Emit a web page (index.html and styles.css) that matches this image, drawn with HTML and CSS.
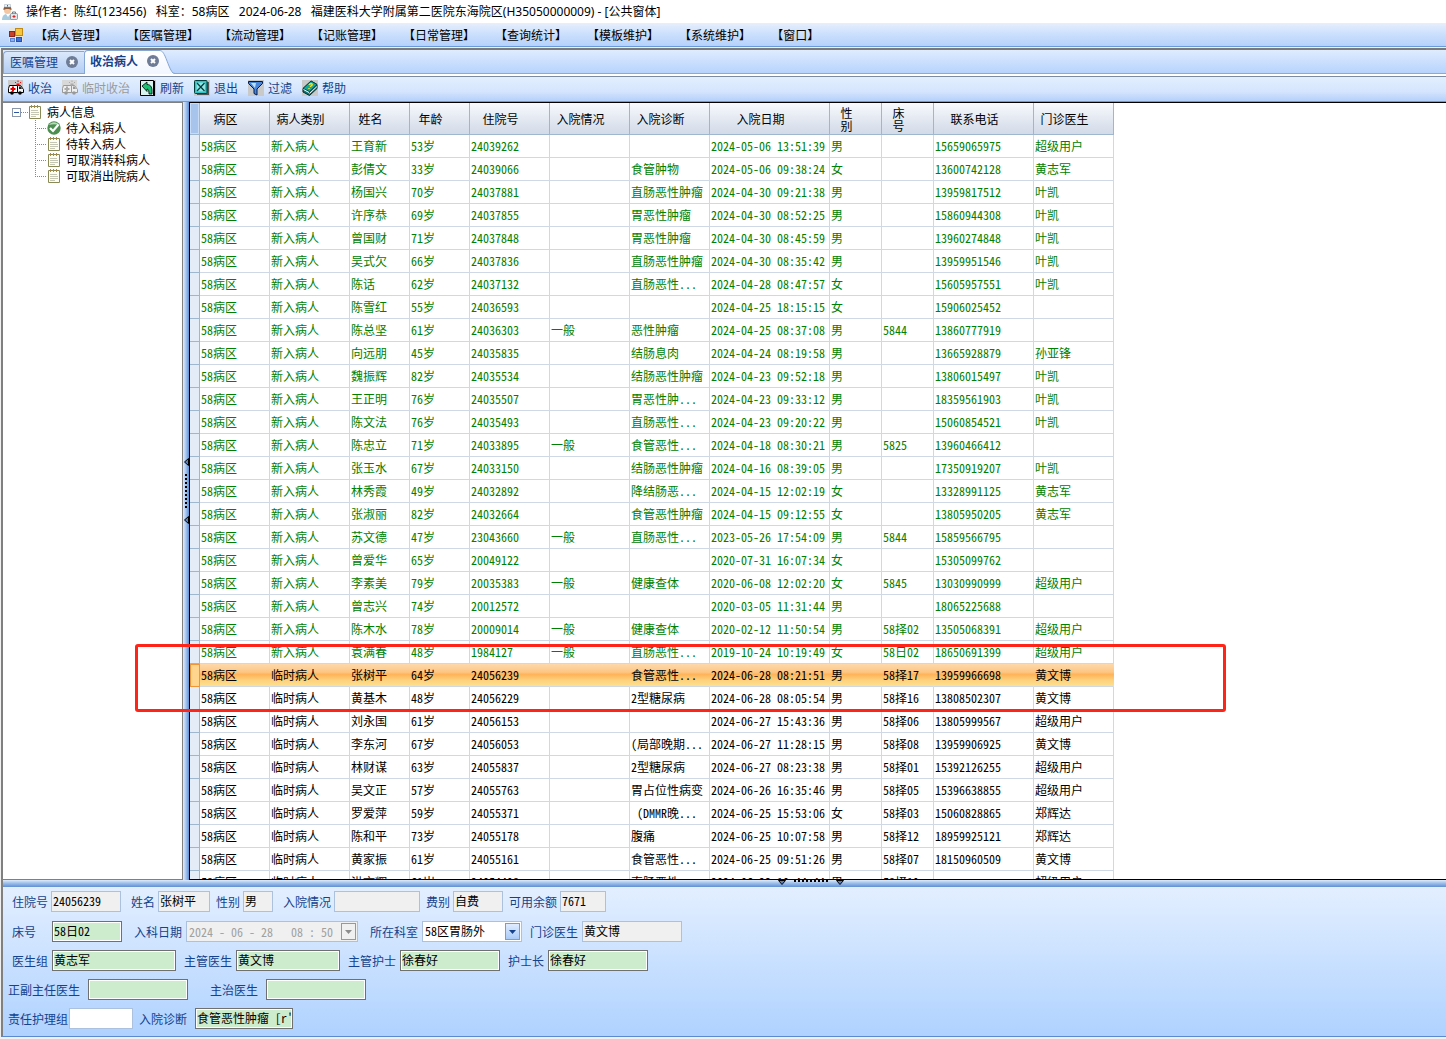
FILE: index.html
```html
<!DOCTYPE html>
<html lang="zh-CN">
<head>
    <meta charset="UTF-8">
    <meta name="viewport" content="width=device-width, initial-scale=1.0">
    <title>公共窗体</title>
    <link rel="stylesheet" href="styles.css">
</head>
<body>
    <header class="title-bar">
        <svg class="icon" viewBox="0 0 16 16">
            <path d="M0 16c0-4 2-6 5-6s5 2 5 6z" fill="#a9cbe0"/>
            <path d="M4 10l2 3 2-3z" fill="#fff"/>
            <circle cx="5.500" cy="6.500" r="3.500" fill="#f3c7a4"/>
            <path d="M1.500 6c-.5-6 8.500-6 8 0-2-1.500-6-1.500-8 0z" fill="#8a5a3a"/>
            <path d="M2.500.5h6V3h-6z" fill="#eef3f8" stroke="#9ab" stroke-width=".5"/>
            <path d="M5 1h1v1.500H5z" fill="#d33"/>
            <rect x="8.500" y="9.500" width="7" height="6" rx="1" fill="#dfe6ea" stroke="#6d7b85" stroke-width=".7"/>
            <path d="M10.500 9.500V8h3v1.500" fill="none" stroke="#6d7b85"/>
            <path d="M11.500 11h1v1h1v1h-1v1h-1v-1h-1v-1h1z" fill="#d22"/>
        </svg>
        <h1>操作者：陈红(123456)&nbsp;&nbsp; 科室：58病区&nbsp;&nbsp; 2024-06-28&nbsp;&nbsp; 福建医科大学附属第二医院东海院区(H35050000009) - [公共窗体]</h1>
    </header>

    <nav class="menu-bar">
        <svg class="icon" viewBox="0 0 16 16">
            <rect x="1" y="1" width="14" height="14" fill="#e8e4da"/>
            <rect x="1.500" y="4.500" width="5" height="5" fill="#c8402a" stroke="#8f2415"/>
            <rect x="7.500" y="1.500" width="7" height="7" fill="#f7c63c" stroke="#c08a18"/>
            <rect x="2.500" y="11.500" width="4" height="3" fill="#8fb0ee" stroke="#5a80d0"/>
            <rect x="8.500" y="10.500" width="5" height="4" fill="#3f6fd8" stroke="#2850a8"/>
        </svg>
        <button type="button">【病人管理】</button>
        <button type="button">【医嘱管理】</button>
        <button type="button">【流动管理】</button>
        <button type="button">【记账管理】</button>
        <button type="button">【日常管理】</button>
        <button type="button">【查询统计】</button>
        <button type="button">【模板维护】</button>
        <button type="button">【系统维护】</button>
        <button type="button">【窗口】</button>
    </nav>

    <main class="window">
        <div class="tabs">
            <div class="tab">
                <a href="#orders">医嘱管理</a>
                <button type="button" class="tab-close" aria-label="关闭医嘱管理">
                    <svg viewBox="0 0 12 12"><circle cx="6" cy="6" r="6" fill="#6f7c96"/><path d="M4 4l4 4M8 4l-4 4" stroke="#fff" stroke-width="2"/></svg>
                </button>
            </div>
            <div class="tab active">
                <a href="#admit">收治病人</a>
                <button type="button" class="tab-close" aria-label="关闭收治病人">
                    <svg viewBox="0 0 12 12"><circle cx="6" cy="6" r="6" fill="#6f7c96"/><path d="M4 4l4 4M8 4l-4 4" stroke="#fff" stroke-width="2"/></svg>
                </button>
            </div>
            <svg class="tab-tail" viewBox="0 0 16 24">
                <defs>
                    <linearGradient id="tail" x1="0" y1="0" x2="0" y2="1">
                        <stop offset="0" stop-color="#fff"/>
                        <stop offset="1" stop-color="#f1f6ff"/>
                    </linearGradient>
                </defs>
                <path d="M0 .5C3 .5 4 2 6 6c3 7 5 14 8 17l2 1H0z" fill="url(#tail)"/>
                <path d="M0 .5C3 .5 4 2 6 6c3 7 5 14 8 17l2 .5" fill="none" stroke="#86a6d3"/>
            </svg>
        </div>

        <div class="toolbar">
            <button type="button">
                <svg class="icon" viewBox="0 0 16 16">
                    <rect width="15" height="14" fill="#c9c9c9"/>
                    <path d="M1.500 5.500h8v7h-9v-4z" fill="#fff" stroke="#000"/>
                    <path d="M9.500 5.500h3l3 4v3h-6z" fill="#f4f4f4" stroke="#000"/>
                    <path d="M11 6.500h1.500l1.500 2.500h-3z" fill="#222"/>
                    <path d="M4 6.500h2V8h1.500v2H6v1.500H4V10H2.500V8H4z" fill="#e80000"/>
                    <path d="M8.500 3.500h3v2h-3z" fill="#f00"/>
                    <path d="M7 2l1 1M10 .5v1.500M13 2l-1 1" stroke="#f00"/>
                    <circle cx="4" cy="13" r="1.800"/><circle cx="12" cy="13" r="1.800"/>
                </svg>
                收治
            </button>
            <button type="button" disabled>
                <svg class="icon" viewBox="0 0 16 16">
                    <rect width="15" height="14" fill="#d8d8d8"/>
                    <path d="M1.500 5.500h8v7h-9v-4z" fill="#eee" stroke="#999"/>
                    <path d="M9.500 5.500h3l3 4v3h-6z" fill="#eee" stroke="#999"/>
                    <path d="M11 6.500h1.500l1.500 2.500h-3z" fill="#999"/>
                    <path d="M4 6.500h2V8h1.500v2H6v1.500H4V10H2.500V8H4z" fill="#aaa"/>
                    <path d="M8.500 3.500h3v2h-3z" fill="#aaa"/>
                    <path d="M7 2l1 1M10 .5v1.500M13 2l-1 1" stroke="#aaa"/>
                    <circle cx="4" cy="13" r="1.800" fill="#999"/><circle cx="12" cy="13" r="1.800" fill="#999"/>
                </svg>
                临时收治
            </button>
            <button type="button">
                <svg class="icon" viewBox="0 0 16 16">
                    <rect width="16" height="16" fill="#c9c9c9"/>
                    <path d="M.5.500h13v15H.5z" fill="#d8f4f0" stroke="#000"/>
                    <path d="M14.500 1v15M2 15.500h13" stroke="#000"/>
                    <path d="M2 6l5-4v2.500c4 0 5.500 3 5 9.500H9c0-3-.5-5-2-5v2.500z" fill="#18c070" stroke="#000" stroke-width=".8"/>
                </svg>
                刷新
            </button>
            <button type="button">
                <svg class="icon" viewBox="0 0 16 16">
                    <rect width="16" height="16" fill="#c9c9c9"/>
                    <path d="M3 2h12v13H3z" fill="#555"/>
                    <rect x=".5" y=".5" width="12.500" height="13" rx="1" fill="#2fc2c2" stroke="#003c3c"/>
                    <rect x="2.500" y="2.500" width="8.500" height="9" fill="#8fe6e6"/>
                    <path d="M3 3l7.500 8M10.500 3L3 11" stroke="#003c3c" stroke-width="1.200"/>
                </svg>
                退出
            </button>
            <button type="button">
                <svg class="icon" viewBox="0 0 16 16">
                    <rect width="16" height="16" fill="#c9c9c9"/>
                    <path d="M.5 1.500h14v2L9 9v6l-3-1.500V9L.5 3.500z" fill="#4a86d8" stroke="#001a50"/>
                    <path d="M3 3h5L7 8z" fill="#bfe0ff"/>
                </svg>
                过滤
            </button>
            <button type="button">
                <svg class="icon" viewBox="0 0 16 16">
                    <rect width="16" height="16" fill="#c9c9c9"/>
                    <path d="M1 8.500L9 1l6 3.500v4L7.500 15.500 1 12z" fill="#067a7a" stroke="#002c2c"/>
                    <path d="M1 8.500L9 1l6 3.500L7.500 11.500z" fill="#12a89c" stroke="#002c2c" stroke-width=".7"/>
                    <path d="M7.500 13.500L15 6.500M7 12.500l-5.500-3" stroke="#fff"/>
                    <path d="M7 5c1-2 4-1.500 3 .3L8 6.800M7 8v1" fill="none" stroke="#ffe21a" stroke-width="1.400"/>
                </svg>
                帮助
            </button>
        </div>

        <div class="workspace">
            <aside class="tree">
                <div class="tree-root">
                    <button type="button" class="toggle" aria-label="折叠"></button>
                    <span class="tree-line"></span>
                    <svg class="note" viewBox="0 0 14 14"><path d="M1.500 1.500h11v12h-11z" fill="#fdfdf4" stroke="#8a8a58"/><path d="M3 5.500h7M3 7.500h8M3 9.500h8M3 11.500h5" stroke="#c6c6b4"/><path d="M3.500 0v3M6.500 0v3M9.500 0v3" stroke="#b08a3c"/></svg>
                    病人信息
                </div>
                <ul>
                    <li>
                        <svg class="note" viewBox="0 0 14 14"><circle cx="7" cy="7" r="6.700" fill="#4c8f50"/><path d="M2 4a6 6 0 0 1 10 0c-3-1-7-1-10 0z" fill="#b9d8b8"/><path d="M3 7l3 3 5.500-6.500" fill="none" stroke="#fff" stroke-width="2.200"/></svg>
                        待入科病人
                    </li>
                    <li>
                        <svg class="note" viewBox="0 0 14 14"><path d="M1.500 1.500h11v12h-11z" fill="#fdfdf4" stroke="#8a8a58"/><path d="M3 5.500h7M3 7.500h8M3 9.500h8M3 11.500h5" stroke="#c6c6b4"/><path d="M3.500 0v3M6.500 0v3M9.500 0v3" stroke="#b08a3c"/></svg>
                        待转入病人
                    </li>
                    <li>
                        <svg class="note" viewBox="0 0 14 14"><path d="M1.500 1.500h11v12h-11z" fill="#fdfdf4" stroke="#8a8a58"/><path d="M3 5.500h7M3 7.500h8M3 9.500h8M3 11.500h5" stroke="#c6c6b4"/><path d="M3.500 0v3M6.500 0v3M9.500 0v3" stroke="#b08a3c"/></svg>
                        可取消转科病人
                    </li>
                    <li>
                        <svg class="note" viewBox="0 0 14 14"><path d="M1.500 1.500h11v12h-11z" fill="#fdfdf4" stroke="#8a8a58"/><path d="M3 5.500h7M3 7.500h8M3 9.500h8M3 11.500h5" stroke="#c6c6b4"/><path d="M3.500 0v3M6.500 0v3M9.500 0v3" stroke="#b08a3c"/></svg>
                        可取消出院病人
                    </li>
                </ul>
            </aside>

            <div class="splitter vertical">
                <svg viewBox="0 0 5 8"><path d="M4.500.500v7L.5 4z" fill="#5c7fb8" stroke="#000"/></svg>
                <span class="grip"></span>
                <svg viewBox="0 0 5 8"><path d="M4.500.500v7L.5 4z" fill="#5c7fb8" stroke="#000"/></svg>
            </div>

            <div class="grid-view">
                <table>
                    <colgroup>
                        <col class="col-head"><col class="col-70"><col class="col-80"><col class="col-60"><col class="col-60">
                        <col class="col-80"><col class="col-80"><col class="col-80"><col class="col-120">
                        <col class="col-52"><col class="col-52"><col class="col-100"><col class="col-80">
                    </colgroup>
                    <thead>
                        <tr>
                            <th class="corner"></th>
                            <th>病区</th>
                            <th>病人类别</th>
                            <th>姓名</th>
                            <th>年龄</th>
                            <th>住院号</th>
                            <th>入院情况</th>
                            <th>入院诊断</th>
                            <th>入院日期</th>
                            <th>性<br>别</th>
                            <th>床<br>号</th>
                            <th>联系电话</th>
                            <th>门诊医生</th>
                        </tr>
                    </thead>
                    <tbody id="patients"></tbody>
                </table>
            </div>

            <div class="marker"></div>
        </div>

        <div class="splitter horizontal">
            <svg viewBox="0 0 8 5"><path d="M.5.500h7L4 4.500z" fill="#5c7fb8" stroke="#000"/></svg>
            <span class="grip"></span>
            <svg viewBox="0 0 8 5"><path d="M.5.500h7L4 4.500z" fill="#5c7fb8" stroke="#000"/></svg>
        </div>

        <form class="details">
            <div class="row">
                <div class="field"><label for="admission-no">住院号</label><input id="admission-no" class="w-70" type="text" value="24056239" readonly></div>
                <div class="field apart"><label for="name">姓名</label><input id="name" class="w-52" type="text" value="张树平" readonly></div>
                <div class="field"><label for="sex">性别</label><input id="sex" class="w-30" type="text" value="男" readonly></div>
                <div class="field apart"><label for="condition">入院情况</label><input id="condition" class="w-86" type="text" readonly></div>
                <div class="field"><label for="fee-type">费别</label><input id="fee-type" class="w-50" type="text" value="自费" readonly></div>
                <div class="field"><label for="balance">可用余额</label><input id="balance" class="w-46" type="text" value="7671" readonly></div>
            </div>
            <div class="row roomy">
                <div class="field"><label for="bed">床号</label><input id="bed" class="w-70 required" type="text" value="58日02"></div>
                <div class="field apart">
                    <label for="in-date">入科日期</label>
                    <div class="combo w-172 disabled">
                        <input id="in-date" type="text" value="2024 - 06 - 28   08 : 50 :" disabled>
                        <button type="button" class="drop" aria-label="选择日期" disabled><svg viewBox="0 0 7 4"><path d="M0 0h7L3.500 4z" fill="#8c8c8c"/></svg></button>
                    </div>
                </div>
                <div class="field apart">
                    <label for="dept">所在科室</label>
                    <div class="combo w-100">
                        <select id="dept"><option>58区胃肠外</option></select>
                        <span class="drop"><svg viewBox="0 0 7 4"><path d="M0 0h7L3.500 4z" fill="#15428b"/></svg></span>
                    </div>
                </div>
                <div class="field"><label for="clinic-doctor">门诊医生</label><input id="clinic-doctor" class="w-100" type="text" value="黄文博" readonly></div>
            </div>
            <div class="row roomy">
                <div class="field"><label for="group">医生组</label><input id="group" class="w-124 required" type="text" value="黄志军"></div>
                <div class="field"><label for="doctor">主管医生</label><input id="doctor" class="w-104 required" type="text" value="黄文博"></div>
                <div class="field"><label for="nurse">主管护士</label><input id="nurse" class="w-100 required" type="text" value="徐春好"></div>
                <div class="field"><label for="head-nurse">护士长</label><input id="head-nurse" class="w-100 required" type="text" value="徐春好"></div>
            </div>
            <div class="row outdent spread">
                <div class="field"><label for="chief">正副主任医生</label><input id="chief" class="w-100 required" type="text"></div>
                <div class="field"><label for="attending">主治医生</label><input id="attending" class="w-100 required" type="text"></div>
            </div>
            <div class="row outdent">
                <div class="field tight"><label for="care-group">责任护理组</label><input id="care-group" class="w-64" type="text"></div>
                <div class="field loose"><label for="diagnosis">入院诊断</label><input id="diagnosis" class="w-98 required" type="text" value="食管恶性肿瘤 [r'"></div>
            </div>
        </form>
    </main>

    <script src="script.js"></script>
</body>
</html>
```
FILE: styles.css
```css
* {
    margin: 0;
    padding: 0;
    box-sizing: border-box;
}

body {
    display: flex;
    flex-direction: column;
    height: 100vh;
    overflow: hidden;
    font-family: "Noto Sans CJK SC", "Noto Sans", sans-serif;
    font-size: 12px;
    line-height: 16px;
    color: #000;
    background: #f0f0f0;
}

button,
input,
select {
    font: inherit;
    color: inherit;
}

button {
    border: none;
    background: none;
}

.icon {
    width: 16px;
    height: 16px;
    flex: none;
}

/* title and menu */

.title-bar {
    display: flex;
    align-items: center;
    gap: 8px;
    height: 23px;
    padding-left: 2px;
    background: #fff;
}

.title-bar h1 {
    font-family: "Noto Sans", "Noto Sans CJK SC", sans-serif;
    font-size: 12px;
    font-weight: normal;
    white-space: nowrap;
}

.menu-bar {
    display: flex;
    align-items: center;
    gap: 20px;
    height: 24px;
    padding-left: 8px;
    background: linear-gradient(#e7effb, #cfe2fd 40%, #b5d1fb);
    border-bottom: 1px solid #6a9ad8;
}

.menu-bar .icon {
    margin-right: -9px;
}

.menu-bar button {
    white-space: nowrap;
}

.window {
    display: flex;
    flex-direction: column;
    flex: 1;
    min-height: 0;
    margin: 1px 0 2px 1px;
    border-top: 2px solid #7a7a7a;
    border-left: 2px solid #808080;
    border-bottom: 1px solid #5b8ad0;
}

/* tabs */

.tabs {
    display: flex;
    align-items: flex-end;
    height: 26px;
    background: linear-gradient(#dfecff, #b5d2fc);
    border-bottom: 2px solid #fff;
    box-shadow: inset 0 -1px #8aa9d6;
}

.tab {
    display: flex;
    align-items: center;
    gap: 8px;
    height: 23px;
    padding: 0 6px 2px;
    color: #15428b;
    background: linear-gradient(#dbe8fb, #b3cdf3);
    border: 1px solid #86a6d3;
    border-right: none;
    border-radius: 4px 0 0 0;
}

.tab a {
    color: inherit;
    text-decoration: none;
}

.tab.active {
    gap: 9px;
    height: 24px;
    padding: 0 0 3px 5px;
    font-weight: bold;
    background: linear-gradient(#fff, #f1f6ff);
    border-bottom: none;
}

.tab-close {
    display: flex;
}

.tab-close svg {
    width: 12px;
    height: 12px;
}

.tab-tail {
    width: 16px;
    height: 24px;
}

/* toolbar */

.toolbar {
    display: flex;
    align-items: center;
    gap: 10px;
    height: 26px;
    padding: 0 0 2px 5px;
    background: linear-gradient(#e3efff, #d5e5fd 60%, #b4d1fb);
    border-top: 1px solid #7a8ba3;
    border-bottom: 1px solid #6a9ad8;
}

.toolbar button {
    display: flex;
    align-items: center;
    gap: 4px;
    white-space: nowrap;
    color: #15428b;
}

.toolbar button:disabled {
    color: #9a9a9a;
}

/* tree, splitters */

.workspace {
    position: relative;
    display: flex;
    flex: 1;
    min-height: 0;
}

.tree {
    width: 180px;
    flex: none;
    padding-top: 1px;
    background: #fff;
    border: 1px solid #808080;
    border-left: none;
}

.tree-root,
.tree li {
    display: flex;
    align-items: center;
    height: 16px;
    white-space: nowrap;
}

.tree-root {
    padding-left: 9px;
}

.toggle {
    width: 9px;
    height: 9px;
    border: 1px solid #8a97ab;
    background: linear-gradient(#2c55a8, #2c55a8) center / 5px 1px no-repeat #fff;
}

.tree-line {
    width: 7px;
    height: 1px;
    background: repeating-linear-gradient(90deg, #888 0 1px, transparent 1px 2px);
}

.tree ul {
    list-style: none;
    padding-left: 32px;
}

.tree li::before {
    content: "";
    width: 12px;
    height: 16px;
    background:
        repeating-linear-gradient(#888 0 1px, transparent 1px 2px) 0 0 / 1px 16px no-repeat,
        repeating-linear-gradient(90deg, #888 0 1px, transparent 1px 2px) 0 8px / 12px 1px no-repeat;
}

.tree li:last-child::before {
    background-size: 1px 8px, 12px 1px;
}

.note {
    width: 14px;
    height: 14px;
    margin-right: 5px;
}

.splitter {
    display: flex;
    align-items: center;
    flex: none;
}

.vertical {
    flex-direction: column;
    justify-content: center;
    gap: 8px;
    width: 6px;
    background: linear-gradient(90deg, #dfebfc, #a5c4ee 50%, #5f8fd3);
}

.vertical svg {
    width: 5px;
    height: 8px;
}

.vertical .grip {
    width: 2px;
    height: 34px;
    background: repeating-linear-gradient(#000 0 2px, transparent 2px 4px);
}

.horizontal {
    align-items: flex-start;
    justify-content: center;
    gap: 8px;
    height: 7px;
    padding-left: 12%;
    background: linear-gradient(#dfebfc, #a5c4ee 40%, #5f8fd3);
}

.horizontal svg {
    width: 8px;
    height: 5px;
}

.horizontal .grip {
    width: 34px;
    height: 2px;
    background: repeating-linear-gradient(90deg, #000 0 2px, transparent 2px 4px);
}

/* patient grid */

.grid-view {
    flex: 1;
    min-width: 0;
    overflow: hidden;
    background: #fff;
    border: 1px solid #000;
    border-right: none;
}

/* half-width latin glyphs, two digits per han character */
.grid-view,
.details {
    font-feature-settings: "hwid";
}

table {
    width: 924px;
    table-layout: fixed;
    border-collapse: separate;
    border-spacing: 0;
}

.col-head { width: 10px; }
.col-52 { width: 52px; }
.col-60 { width: 60px; }
.col-70 { width: 70px; }
.col-80 { width: 80px; }
.col-100 { width: 100px; }
.col-120 { width: 120px; }

thead th {
    height: 32px;
    padding-right: 18px;
    font-weight: normal;
    line-height: 13px;
    background: linear-gradient(#f8fafd, #e4e9f2 50%, #d3dae8);
    border-right: 1px solid #9eb6ce;
    border-bottom: 1px solid #9eb6ce;
}

thead .corner {
    padding: 0;
    background: #a7c5ec;
    box-shadow: inset 0 0 0 1px #c8dcf5;
}

tbody th {
    background: #e4ecf7;
    border-right: 1px solid #9eb6ce;
    border-bottom: 1px solid #9eb6ce;
}

tbody td {
    height: 23px;
    padding-left: 1px;
    overflow: hidden;
    white-space: pre;
    border-right: 1px solid #d0d7e5;
    border-bottom: 1px solid #d0d7e5;
}

tr.new {
    color: #008000;
}

tr.selected {
    background: linear-gradient(#fdd9ac, #fdc684 35%, #ffb459 45%, #fdd07c 70%, #fee391);
}

tr.selected td {
    border-right-color: transparent;
}

tr.selected th {
    background: #ffd58d;
    border: 1px solid #f29536;
}

/* red frame drawn over the rows */
.marker {
    position: absolute;
    top: 542px;
    left: 132px;
    width: 1091px;
    height: 68px;
    border: 3px solid #ff2418;
    border-radius: 3px;
    pointer-events: none;
}

/* details form */

.details {
    display: flex;
    flex-direction: column;
    gap: 8px;
    padding: 4px 0 7px 9px;
    color: #15428b;
    background: linear-gradient(#e3efff, #afd2ff);
}

.row {
    display: flex;
    gap: 6px;
}

.row:first-child {
    margin-bottom: 1px;
}

.roomy {
    gap: 8px;
}

.outdent {
    margin-left: -4px;
}

.spread {
    gap: 22px;
}

.field {
    display: flex;
    align-items: center;
    gap: 3px;
    white-space: nowrap;
}

.field.apart {
    margin-left: 4px;
}

.roomy .field {
    gap: 4px;
}

.roomy .field:first-child label {
    min-width: 36px;
}

.spread .field,
.field.loose {
    gap: 8px;
}

.field.tight {
    gap: 1px;
}

.field input,
.combo {
    height: 21px;
    color: #000;
    background: #fff;
    border: 1px solid #abc1de;
}

.field input {
    padding: 0 1px 3px;
    outline: none;
}

.field input:read-only {
    background: #f0f0f0;
}

.field input.required {
    background: #cdebcd;
    border-color: #707070;
    box-shadow: inset 0 0 0 1px #fff;
}

.combo {
    position: relative;
    display: flex;
    align-items: center;
}

.field .combo input,
.combo select {
    width: 100%;
    height: 19px;
    padding: 0 17px 1px 2px;
    background: transparent;
    border: none;
    outline: none;
    appearance: none;
}

.combo.disabled,
.field .combo input:disabled {
    color: #a0a0a0;
    background: #f0f0f0;
}

.drop {
    position: absolute;
    top: 1px;
    right: 1px;
    display: flex;
    align-items: center;
    justify-content: center;
    width: 15px;
    height: 17px;
    background: linear-gradient(#e0edff, #a9cbf7);
    border: 1px solid #7b9cd0;
    pointer-events: none;
}

.drop:disabled {
    background: #f0f0f0;
}

.drop svg {
    width: 7px;
    height: 4px;
}

.w-30 { width: 30px; }
.w-46 { width: 46px; }
.w-50 { width: 50px; }
.w-52 { width: 52px; }
.w-64 { width: 64px; }
.w-70 { width: 70px; }
.w-86 { width: 86px; }
.w-98 { width: 98px; }
.w-100 { width: 100px; }
.w-104 { width: 104px; }
.w-124 { width: 124px; }
.w-172 { width: 172px; }
```
FILE: script.js
```js
// name, age, admission no, condition, diagnosis, date, sex, bed, phone, doctor
const newPatients = [
    ['王育新', '53岁', '24039262', '', '', '2024-05-06 13:51:39', '男', '', '15659065975', '超级用户'],
    ['彭倩文', '33岁', '24039066', '', '食管肿物', '2024-05-06 09:38:24', '女', '', '13600742128', '黄志军'],
    ['杨国兴', '70岁', '24037881', '', '直肠恶性肿瘤', '2024-04-30 09:21:38', '男', '', '13959817512', '叶凯'],
    ['许序恭', '69岁', '24037855', '', '胃恶性肿瘤', '2024-04-30 08:52:25', '男', '', '15860944308', '叶凯'],
    ['曾国财', '71岁', '24037848', '', '胃恶性肿瘤', '2024-04-30 08:45:59', '男', '', '13960274848', '叶凯'],
    ['吴式欠', '66岁', '24037836', '', '直肠恶性肿瘤', '2024-04-30 08:35:42', '男', '', '13959951546', '叶凯'],
    ['陈话', '62岁', '24037132', '', '直肠恶性...', '2024-04-28 08:47:57', '女', '', '15605957551', '叶凯'],
    ['陈雪红', '55岁', '24036593', '', '', '2024-04-25 18:15:15', '女', '', '15906025452', ''],
    ['陈总坚', '61岁', '24036303', '一般', '恶性肿瘤', '2024-04-25 08:37:08', '男', '5844', '13860777919', ''],
    ['向远朋', '45岁', '24035835', '', '结肠息肉', '2024-04-24 08:19:58', '男', '', '13665928879', '孙亚锋'],
    ['魏振辉', '82岁', '24035534', '', '结肠恶性肿瘤', '2024-04-23 09:52:18', '男', '', '13806015497', '叶凯'],
    ['王正明', '76岁', '24035507', '', '胃恶性肿...', '2024-04-23 09:33:12', '男', '', '18359561903', '叶凯'],
    ['陈文法', '76岁', '24035493', '', '直肠恶性...', '2024-04-23 09:20:22', '男', '', '15060854521', '叶凯'],
    ['陈忠立', '71岁', '24033895', '一般', '食管恶性...', '2024-04-18 08:30:21', '男', '5825', '13960466412', ''],
    ['张玉水', '67岁', '24033150', '', '结肠恶性肿瘤', '2024-04-16 08:39:05', '男', '', '17350919207', '叶凯'],
    ['林秀霞', '49岁', '24032892', '', '降结肠恶...', '2024-04-15 12:02:19', '女', '', '13328991125', '黄志军'],
    ['张淑丽', '82岁', '24032664', '', '食管恶性肿瘤', '2024-04-15 09:12:55', '女', '', '13805950205', '黄志军'],
    ['苏文德', '47岁', '23043660', '一般', '直肠恶性...', '2023-05-26 17:54:09', '男', '5844', '15859566795', ''],
    ['曾爱华', '65岁', '20049122', '', '', '2020-07-31 16:07:34', '女', '', '15305099762', ''],
    ['李素美', '79岁', '20035383', '一般', '健康查体', '2020-06-08 12:02:20', '女', '5845', '13030990999', '超级用户'],
    ['曾志兴', '74岁', '20012572', '', '', '2020-03-05 11:31:44', '男', '', '18065225688', ''],
    ['陈木水', '78岁', '20009014', '一般', '健康查体', '2020-02-12 11:50:54', '男', '58择02', '13505068391', '超级用户'],
    ['袁满春', '48岁', '1984127', '一般', '直肠恶性...', '2019-10-24 10:19:49', '女', '58日02', '18650691399', '超级用户']
];

const tempPatients = [
    ['张树平', '64岁', '24056239', '', '食管恶性...', '2024-06-28 08:21:51', '男', '58择17', '13959966698', '黄文博'],
    ['黄基木', '48岁', '24056229', '', '2型糖尿病', '2024-06-28 08:05:54', '男', '58择16', '13808502307', '黄文博'],
    ['刘永国', '61岁', '24056153', '', '', '2024-06-27 15:43:36', '男', '58择06', '13805999567', '超级用户'],
    ['李东河', '67岁', '24056053', '', '(局部晚期...', '2024-06-27 11:28:15', '男', '58择08', '13959906925', '黄文博'],
    ['林财谋', '63岁', '24055837', '', '2型糖尿病', '2024-06-27 08:23:38', '男', '58择01', '15392126255', '超级用户'],
    ['吴文正', '57岁', '24055763', '', '胃占位性病变', '2024-06-26 16:35:46', '男', '58择05', '15396638855', '超级用户'],
    ['罗爱萍', '59岁', '24055371', '', ' （DMMR晚...', '2024-06-25 15:53:06', '女', '58择03', '15060828865', '郑辉达'],
    ['陈和平', '73岁', '24055178', '', '腹痛', '2024-06-25 10:07:58', '男', '58择12', '18959925121', '郑辉达'],
    ['黄家振', '61岁', '24055161', '', '食管恶性...', '2024-06-25 09:51:26', '男', '58择07', '18150960509', '黄文博'],
    ['洪文辉', '61岁', '24054498', '', '直肠恶性...', '2024-06-23 10:44:44', '男', '58择19', '', '超级用户']
];

const selectedNo = '24056239';
const tbody = document.getElementById('patients');

function addRow(type, patient) {
    const tr = tbody.insertRow();
    if (type === '新入病人') tr.className = 'new';
    if (patient[2] === selectedNo) tr.className = 'selected';
    tr.appendChild(document.createElement('th'));
    ['58病区', type, ...patient].forEach(text => {
        tr.insertCell().textContent = text;
    });
}

newPatients.forEach(p => addRow('新入病人', p));
tempPatients.forEach(p => addRow('临时病人', p));
```
